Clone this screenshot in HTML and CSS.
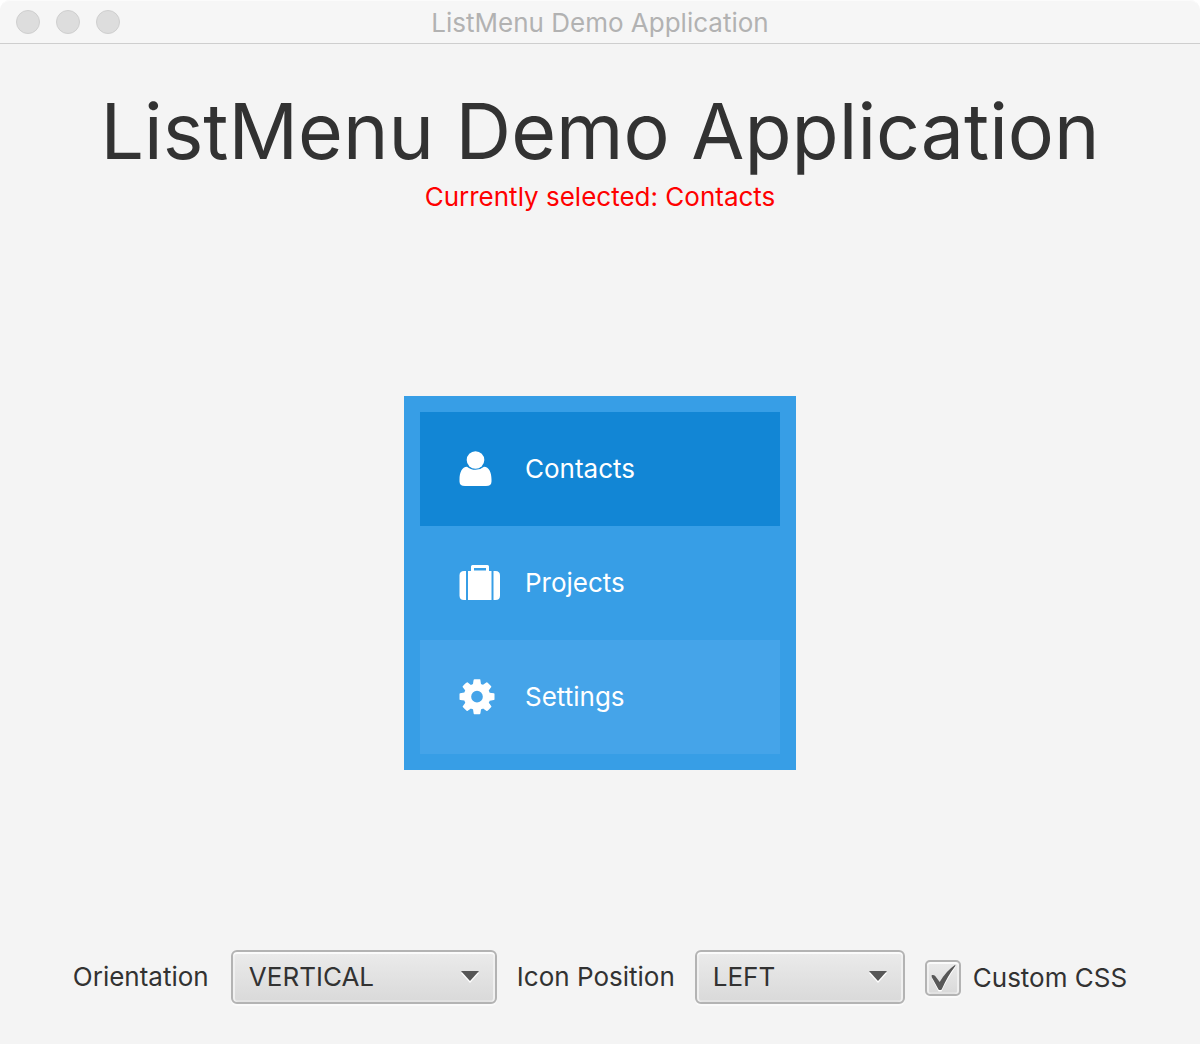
FILE: index.html
```html
<!DOCTYPE html>
<html lang="en">
<head>
<meta charset="utf-8">
<meta name="viewport" content="width=device-width, initial-scale=1">
<title>ListMenu Demo Application</title>
<link rel="stylesheet" href="styles.css">
</head>
<body>
<div class="window">
  <div class="titlebar">
    <div class="lights"><span class="light"></span><span class="light"></span><span class="light"></span></div>
    <div class="window-title">ListMenu Demo Application</div>
  </div>
  <header class="header">
    <h1 class="heading">ListMenu Demo Application</h1>
    <p class="status">Currently selected: Contacts</p>
  </header>
  <main class="content">
    <nav class="menu">
      <button type="button" class="item item-selected">
        <svg class="icon" viewBox="0 0.5 42 36" width="42" height="36" aria-hidden="true">
          <circle cx="16.5" cy="9.500" r="8.8"/>
          <path d="M8 16.200C3 16.200.5 22 .5 29v2Q.5 35.500 6 35.500h21q5.500 0 5.500-4.500v-2c0-7-2.500-12.800-7.500-12.800q-3.600 3.100-8.500 3.100T8 16.200z"/>
        </svg>
        <span>Contacts</span>
      </button>
      <button type="button" class="item">
        <svg class="icon" viewBox="0 0.5 42 36" width="42" height="36" aria-hidden="true">
          <path d="M7 6.500v29H5q-4.500 0-4.500-4.500V11Q.5 6.500 5 6.500z"/>
          <path fill-rule="evenodd" d="M9 6.500h3V2q0-1.500 1.500-1.500h15Q30 .5 30 2v4.500h2.500v29H9zM15 3.500v2.500h12v-2.500z"/>
          <path d="M34.500 6.500h2q4.500 0 4.500 4.500v20q0 4.500-4.500 4.500h-2z"/>
        </svg>
        <span>Projects</span>
      </button>
      <button type="button" class="item item-hover">
        <svg class="icon" viewBox="106 122 1843 1580" width="42" height="36" aria-hidden="true">
          <path d="M1152 896q0-106-75-181t-181-75-181 75-75 181 75 181 181 75 181-75 75-181zm512-109v222q0 12-8 23t-20 13l-185 28q-19 54-39 91 35 50 107 138 10 12 10 25t-9 23q-27 37-99 108t-94 71q-12 0-26-9l-138-108q-44 23-91 38-16 136-29 186-7 28-36 28h-222q-14 0-24.500-8.500t-11.500-21.500l-28-184q-49-16-90-37l-141 107q-10 9-25 9-14 0-25-11-126-114-165-168-7-10-7-23 0-12 8-23 15-21 51-66.500t54-70.500q-27-50-41-99l-183-27q-13-2-21-12.500t-8-23.500v-222q0-12 8-23t19-13l186-28q14-46 39-92-40-57-107-138-10-12-10-24 0-10 9-23 26-36 98.500-107.500t94.500-71.500q13 0 26 10l138 107q44-23 91-38 16-136 29-186 7-28 36-28h222q14 0 24.500 8.500t11.500 21.500l28 184q49 16 90 37l142-107q9-9 24-9 13 0 25 10 129 119 165 170 7 8 7 22 0 12-8 23-15 21-51 66.500t-54 70.500q26 50 41 98l183 28q13 2 21 12.500t8 23.500z"/>
        </svg>
        <span>Settings</span>
      </button>
    </nav>
  </main>
  <footer class="options">
    <label class="first-label" for="orientation">Orientation</label>
    <div class="combo combo-wide">
      <select id="orientation"><option>VERTICAL</option><option>HORIZONTAL</option></select>
      <svg class="arrow" viewBox="0 0 18 12" width="18" height="12" aria-hidden="true"><path fill="#fff" d="M0 2h18l-9 10z"/><path fill="#575757" d="M0 0h18l-9 10z"/></svg>
    </div>
    <label for="position">Icon Position</label>
    <div class="combo">
      <select id="position"><option>LEFT</option><option>RIGHT</option><option>TOP</option><option>BOTTOM</option></select>
      <svg class="arrow" viewBox="0 0 18 12" width="18" height="12" aria-hidden="true"><path fill="#fff" d="M0 2h18l-9 10z"/><path fill="#575757" d="M0 0h18l-9 10z"/></svg>
    </div>
    <div class="check">
      <span class="tick">
        <input type="checkbox" id="custom" checked>
        <svg class="mark" viewBox="0 0 36 36" width="36" height="36" aria-hidden="true"><path fill="#fff" d="M7 18.500L13.500 31.500h3Q21 21 30.500 7V5.500L15 24z"/><path fill="#575757" d="M6.700 15q2.300-.5 3.500 1L14.700 22Q21 11 30.300 4.700V6Q22 17 16.700 29.500q-1.700 1-3.200 0L6.700 17z"/></svg>
      </span>
      <label for="custom">Custom CSS</label>
    </div>
  </footer>
</div>
</body>
</html>
```
FILE: styles.css
```css
* {
  box-sizing: border-box;
}

body {
  margin: 0;
  background: #fff;
  color: #323232;
  font-family: Inter, "Liberation Sans", sans-serif;
  font-size: 26px;
  line-height: 32px;
}

.window {
  display: flex;
  flex-direction: column;
  min-height: 100vh;
  background: #f4f4f4;
  border-radius: 10px 10px 0 0;
}

.titlebar {
  display: grid;
  grid-template-columns: 1fr auto 1fr;
  align-items: center;
  height: 44px;
  padding: 0 16px;
  background: #f6f6f6;
  border-top: 1px solid #fbfbfb;
  border-bottom: 1px solid #cecece;
  border-radius: 10px 10px 0 0;
  color: #b2b2b2;
}

.window-title {
  padding-top: 2px;
}

.lights {
  display: flex;
  gap: 16px;
}

.light {
  width: 24px;
  height: 24px;
  border: 1px solid #cfcfcf;
  border-radius: 50%;
  background: #dddddd;
}

.header {
  padding: 41px 0 2px;
  text-align: center;
}

.heading {
  margin: 0 0 4px;
  font-size: 77px;
  font-weight: 400;
  line-height: 92px;
}

.status {
  margin: 0;
  color: #ff0000;
}

.content {
  flex: 1;
  display: flex;
  align-items: center;
  justify-content: center;
}

.menu {
  display: flex;
  flex-direction: column;
  width: 392px;
  padding: 16px;
  background: #379ee6;
}

.item {
  display: flex;
  align-items: center;
  gap: 24px;
  height: 114px;
  padding: 0 39px;
  border: 0;
  background: transparent;
  color: #fff;
  font: inherit;
}

.item-selected {
  background: #1286d5;
}

.item-hover {
  background: #45a4e9;
}

.icon {
  fill: #fff;
}

.options {
  display: flex;
  align-items: center;
  justify-content: center;
  gap: 20px;
  padding-bottom: 40px;
}

.first-label {
  min-width: 138px;
}

.combo {
  display: grid;
  align-items: center;
  width: 210px;
}

.combo-wide {
  width: 266px;
}

.combo select {
  grid-area: 1 / 1;
  appearance: none;
  width: 100%;
  height: 54px;
  padding: 0 16px;
  border: 2px solid #b3b3b3;
  border-radius: 6px;
  background: linear-gradient(#ebebeb, #d9d9d9);
  box-shadow: inset 0 2px #fbfbfb, inset 2px 0 #f0f0f0, inset -2px 0 #f0f0f0, inset 0 -2px #e2e2e2, 0 2px #fafafa;
  color: inherit;
  font: inherit;
}

.arrow {
  grid-area: 1 / 1;
  justify-self: end;
  margin-right: 18px;
  pointer-events: none;
}

.check {
  display: flex;
  align-items: center;
  gap: 12px;
  padding-top: 2px;
}

.tick {
  display: grid;
}

.tick input {
  grid-area: 1 / 1;
  appearance: none;
  width: 36px;
  height: 36px;
  margin: 0;
  border: 2px solid #b3b3b3;
  border-radius: 5px;
  background: linear-gradient(#ebebeb, #d9d9d9);
  box-shadow: inset 0 2px #fbfbfb, inset 2px 0 #f0f0f0, inset -2px 0 #f0f0f0, inset 0 -2px #e2e2e2, 0 2px #fafafa;
}

.mark {
  grid-area: 1 / 1;
  visibility: hidden;
  pointer-events: none;
}

.tick input:checked + .mark {
  visibility: visible;
}
```
